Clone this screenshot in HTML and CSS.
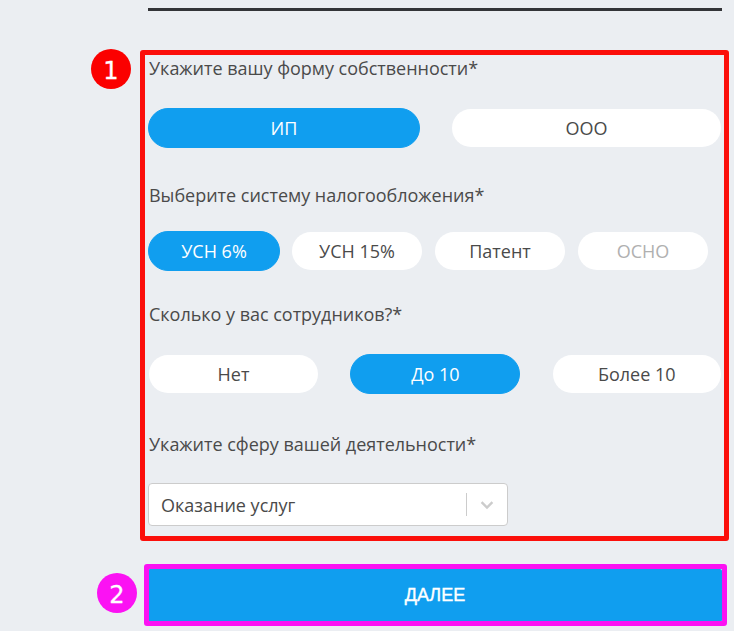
FILE: index.html
```html
<!DOCTYPE html>
<html lang="ru">
<head>
<meta charset="utf-8">
<title>Форма</title>
<link rel="stylesheet" href="styles.css">
</head>
<body>
<main class="page">
  <div class="rule"></div>
  <form class="form">
    <p class="label label-first">Укажите вашу форму собственности*</p>
    <div class="options options-two">
      <button type="button" class="pill active">ИП</button>
      <button type="button" class="pill">ООО</button>
    </div>
    <p class="label label-second">Выберите систему налогообложения*</p>
    <div class="options options-four">
      <button type="button" class="pill active">УСН 6%</button>
      <button type="button" class="pill">УСН 15%</button>
      <button type="button" class="pill">Патент</button>
      <button type="button" class="pill disabled">ОСНО</button>
    </div>
    <p class="label label-third">Сколько у вас сотрудников?*</p>
    <div class="options options-three">
      <button type="button" class="pill">Нет</button>
      <button type="button" class="pill active">До 10</button>
      <button type="button" class="pill">Более 10</button>
    </div>
    <p class="label label-fourth">Укажите сферу вашей деятельности*</p>
    <div class="select">
      <span class="select-value">Оказание услуг</span>
      <span class="select-sep"></span>
      <svg class="select-arrow" width="20" height="20" viewBox="0 0 20 20" aria-hidden="true"><path d="M4.6 7.2 10 12.6l5.4-5.4" fill="none" stroke="#ccc" stroke-width="2.4"/></svg>
    </div>
    <button type="button" class="next">ДАЛЕЕ</button>
  </form>
  <div class="mark mark-red"></div>
  <div class="mark mark-magenta"></div>
  <div class="badge badge-red">1</div>
  <div class="badge badge-magenta">2</div>
</main>
</body>
</html>
```
FILE: styles.css
```css
* { box-sizing: border-box; }
html, body { margin: 0; padding: 0; }
body {
  background: #ebeef2;
  font-family: "Open Sans", sans-serif;
  color: #4a4a4a;
  height: 631px;
  overflow: hidden;
}
.page {
  position: relative;
  width: 734px;
  height: 631px;
  padding: 8px 12px 0 148px;
}
.rule { height: 3px; background: #333438; }
.form { display: flex; flex-direction: column; }
.label {
  margin: 0;
  font-size: 18px;
  line-height: 24px;
  letter-spacing: -0.02px;
  color: #4a4a4a;
  padding-left: 1px;
}
.label-first { margin-top: 45px; }
.label-second { margin-top: 35px; }
.label-third { margin-top: 31px; }
.label-fourth { margin-top: 38px; }
.options { display: grid; }
.options-two { grid-template-columns: 272px 271px; column-gap: 31px; margin-top: 28px; }
.options-four { grid-template-columns: repeat(4, 132px); column-gap: 11px; margin-top: 24px; }
.options-three { grid-template-columns: 171px 170px 170px; column-gap: 31.4px; margin-top: 28px; }
.pill {
  height: 40px;
  padding: 0;
  border: 1px solid transparent;
  border-radius: 20px;
  background: #fff;
  background-clip: padding-box;
  font-family: "Open Sans", sans-serif;
  font-size: 18px;
  color: #4a4a4a;
}
.pill.active {
  background: #109eef;
  border-color: #109eef;
  color: #fff;
  font-weight: 500;
}
.pill.disabled { color: #b0b0b0; }
.select {
  display: flex;
  align-items: center;
  height: 43px;
  width: 360px;
  margin-top: 27px;
  padding: 0 10px 0 12px;
  background: #fff;
  border: 1px solid #ccc;
  border-radius: 4px;
}
.select-value { flex: 1; font-size: 18px; }
.select-sep { width: 1px; height: 23px; background: #ccc; margin-right: 10px; }
.select-arrow { display: block; }
.next {
  height: 53px;
  margin-top: 43px;
  border: 0;
  border-radius: 2px;
  background: #109eef;
  color: #fff;
  font-family: "Liberation Sans", Arial, sans-serif;
  font-weight: 400;
  -webkit-text-stroke: 0.4px #fff;
  font-size: 18px;
}
.mark { position: absolute; border-style: solid; border-radius: 3px; }
.mark-red { left: 140px; top: 50px; width: 589px; height: 491px; border-width: 5px; border-color: #fb0f0b; }
.mark-magenta { left: 144px; top: 564px; width: 583px; height: 62px; border-width: 5px; border-color: #fb12f3; }
.badge {
  position: absolute;
  width: 40px;
  height: 40px;
  padding-top: 3px;
  border-radius: 50%;
  display: flex;
  align-items: center;
  justify-content: center;
  color: #fff;
  font-family: "DejaVu Sans", sans-serif;
  font-size: 24px;
  -webkit-text-stroke: 0.3px #fff;
  line-height: 1;
}
.badge-red { left: 91px; top: 49px; background: #fb0000; }
.badge-magenta { left: 97px; top: 573px; background: #fb12f3; }
```
